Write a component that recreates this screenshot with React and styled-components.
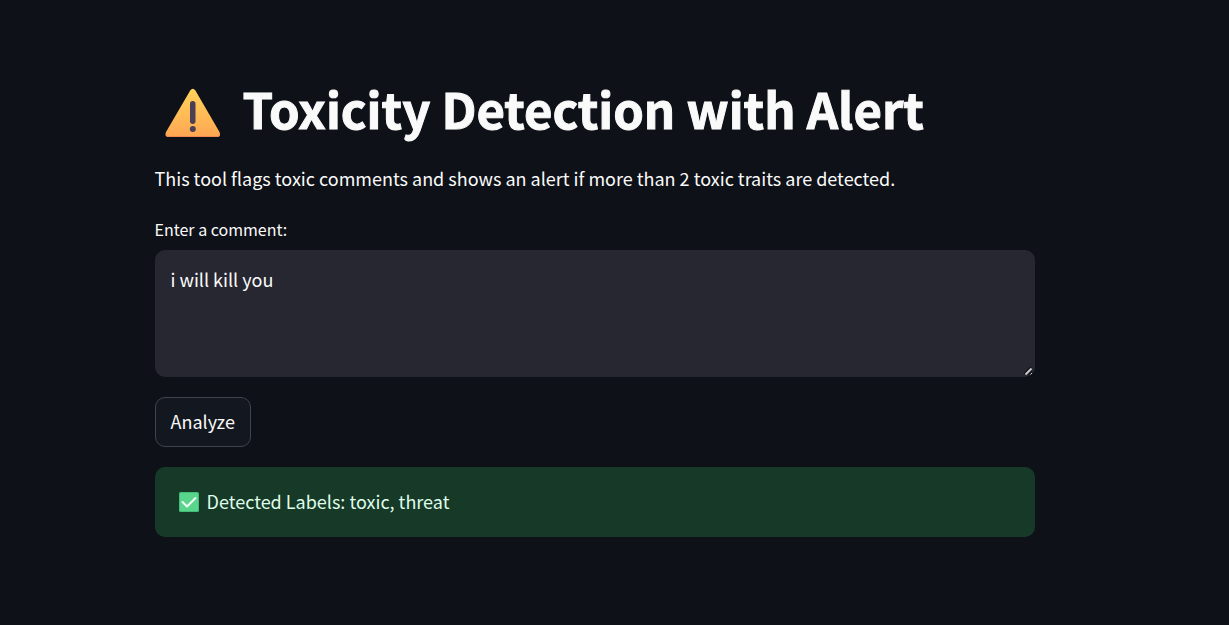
import React, { useState } from "react";
import styled, { createGlobalStyle } from "styled-components";

const GlobalStyle = createGlobalStyle`
  *, *::before, *::after { box-sizing: border-box; }
  html { background: #0e1117; color-scheme: dark; }
  body {
    margin: 0;
    background: #0e1117;
    color: #fafafa;
    font: 400 18px/28px "Noto Sans CJK SC", "Noto Sans", sans-serif;
  }
`;

const Page = styled.main`
  display: flex;
  justify-content: center;
  min-height: 100vh;
  padding: 72px 60px 88px 20px;
`;

const Content = styled.div`
  display: flex;
  flex-direction: column;
  width: 100%;
  max-width: 880px;
  gap: 20px;
`;

const Title = styled.h1`
  display: flex;
  align-items: center;
  gap: 20px;
  margin: 0;
  padding-left: 8px;
  font-size: 49px;
  font-weight: 700;
  line-height: 72px;
  -webkit-text-stroke: 1px #fafafa;
`;

const Intro = styled.p`
  margin: 0 0 4px;
`;

const Field = styled.div`
  display: flex;
  flex-direction: column;
  gap: 8px;
`;

const Label = styled.label`
  font-size: 16px;
  line-height: 26px;
`;

const InputFrame = styled.div`
  position: relative;
`;

const CommentBox = styled.textarea`
  display: block;
  width: 100%;
  height: 127px;
  padding: 16px;
  border: 0;
  border-radius: 10px;
  outline: none;
  background: #262730;
  color: #fafafa;
  font: inherit;
  line-height: 26px;
  resize: vertical;

  &::-webkit-resizer {
    background: transparent;
  }
`;

const ResizeGrip = styled.svg`
  position: absolute;
  right: 0;
  bottom: 0;
  pointer-events: none;
`;

const AnalyzeButton = styled.button`
  align-self: flex-start;
  height: 50px;
  padding: 0 15px 2px;
  border: 1px solid #41444c;
  border-radius: 10px;
  background: #131720;
  color: #fafafa;
  font: inherit;
  cursor: pointer;
`;

const Result = styled.div`
  display: flex;
  align-items: center;
  gap: 8px;
  min-height: 70px;
  padding: 16px 24px;
  border-radius: 10px;
  background: #173928;
  color: #dffde9;
`;

const ResultText = styled.span`
  padding-bottom: 2px;
`;

const WarningIcon = () => (
  <svg width="60" height="60" viewBox="0 0 60 60" aria-hidden="true">
    <defs>
      <linearGradient id="warning" x1="0" y1="0" x2="0" y2="1">
        <stop offset="0" stopColor="#ffd45a" />
        <stop offset="1" stopColor="#ffa653" />
      </linearGradient>
    </defs>
    <path
      d="M27.200 12.500 Q29.800 9 32.400 12.500 L56.500 54 Q58.500 59 54 59 H5.500 Q1 59 3 54 Z"
      fill="url(#warning)"
    />
    <path d="M3.500 57 Q4 58.500 6 58.500 H54 Q56 58.500 56.500 57" fill="none" stroke="#f18852" />
    <rect x="27" y="23" width="5.500" height="23" rx="2.750" fill="#4b4053" />
    <circle cx="29.800" cy="51" r="3" fill="#4b4053" />
  </svg>
);

const CheckIcon = () => (
  <svg width="20" height="20" viewBox="0 0 20 20" aria-hidden="true">
    <rect width="20" height="20" rx="1.500" fill="#43bd78" />
    <rect x="1" y="1" width="18" height="18" rx="1" fill="#59d68b" />
    <path
      d="M3.500 10 L8 14.500 L16.500 6"
      fill="none"
      stroke="#f5fff8"
      strokeWidth="2"
      strokeLinecap="round"
      strokeLinejoin="round"
    />
  </svg>
);

export default function App() {
  const [comment, setComment] = useState("i will kill you");
  return (
    <>
      <GlobalStyle />
      <Page>
        <Content>
          <Title>
            <WarningIcon />
            Toxicity Detection with Alert
          </Title>
          <Intro>
            This tool flags toxic comments and shows an alert if more than 2 toxic traits are
            detected.
          </Intro>
          <Field>
            <Label htmlFor="comment">Enter a comment:</Label>
            <InputFrame>
              <CommentBox
                id="comment"
                spellCheck={false}
                value={comment}
                onChange={(e) => setComment(e.target.value)}
              />
              <ResizeGrip width="12" height="12" viewBox="0 0 12 12" aria-hidden="true">
                <path d="M1 9 L8 2" stroke="#0c0d10" strokeWidth="1.500" />
                <path d="M2.500 9.500 L8.500 3.500" stroke="#c9c9c9" strokeWidth="2" />
                <path d="M5 10 L9 6" stroke="#0c0d10" strokeWidth="1" />
                <path d="M7.500 9.500 L9 8" stroke="#c9c9c9" strokeWidth="1" />
              </ResizeGrip>
            </InputFrame>
          </Field>
          <AnalyzeButton type="button">Analyze</AnalyzeButton>
          <Result role="status">
            <CheckIcon />
            <ResultText>Detected Labels: toxic, threat</ResultText>
          </Result>
        </Content>
      </Page>
    </>
  );
}
